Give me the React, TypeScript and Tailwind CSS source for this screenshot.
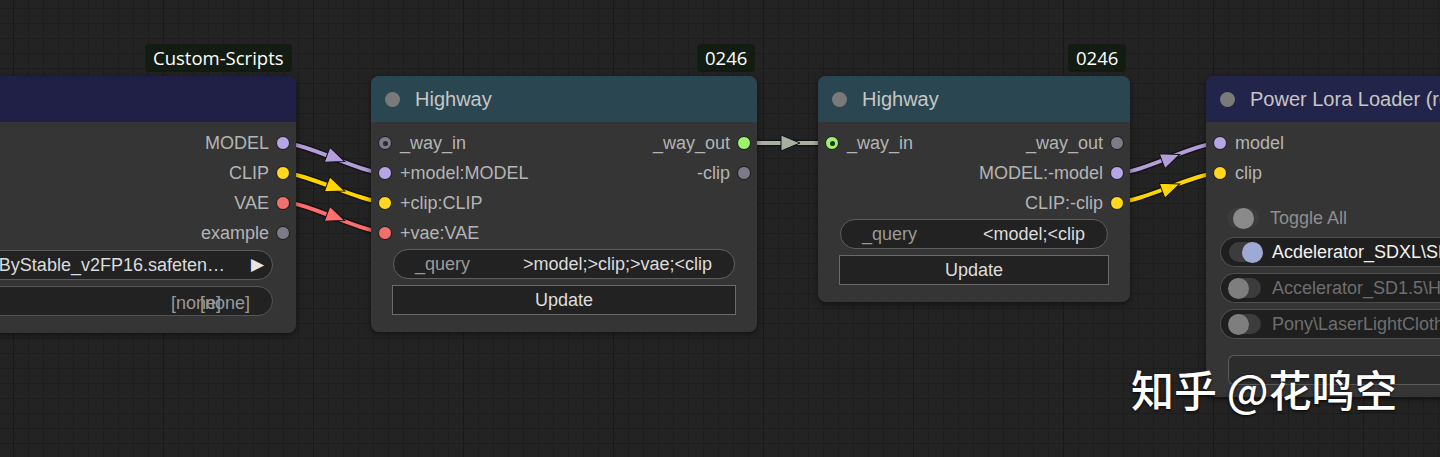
import React from 'react'

type Pt = [number, number]

const SLOT: Record<string, string> = {
  model: 'bg-[#b7a6e6]',
  clip: 'bg-[#ffd81f]',
  vae: 'bg-[#f0706c]',
  gray: 'bg-[#7c7b88]',
  green: 'bg-[#9cf26c]',
}

function Link({ from, to, color }: { from: Pt; to: Pt; color: string }) {
  const [x0, y0] = from
  const [x1, y1] = to
  const d = Math.max((x1 - x0) * 0.25, 10)
  const path = `M ${x0} ${y0} C ${x0 + d} ${y0}, ${x1 - d} ${y1}, ${x1} ${y1}`
  const mx = (x0 + x1) / 2
  const my = (y0 + y1) / 2
  const ang = (Math.atan2(1.5 * (y1 - y0), 1.5 * (x1 - x0) - 1.5 * d) * 180) / Math.PI
  return (
    <g>
      <path d={path} fill="none" stroke="#111" strokeWidth={7} strokeOpacity={0.8} />
      <path d={path} fill="none" stroke={color} strokeWidth={4} />
      <path
        d="M 10 0 L -9 -8 L -9 8 Z"
        fill={color}
        stroke="#111"
        strokeWidth={1}
        transform={`translate(${mx + 2} ${my}) rotate(${ang})`}
      />
    </g>
  )
}

function Dot({ kind, hollow }: { kind: string; hollow?: boolean }) {
  return (
    <span
      className={`w-[14px] h-[14px] rounded-full border border-[#1b1b1b] shrink-0 flex items-center justify-center ${SLOT[kind]}`}
    >
      {hollow && <span className="w-[5px] h-[5px] rounded-full bg-[#2a2a2a]" />}
    </span>
  )
}

function Row({ left, right }: { left?: [string, string, boolean?]; right?: [string, string] }) {
  return (
    <div className="h-[30px] flex items-center justify-between">
      {left ? (
        <div className="flex items-center gap-[8px] pl-[7px]">
          <Dot kind={left[1]} hollow={left[2]} />
          <span>{left[0]}</span>
        </div>
      ) : (
        <span />
      )}
      {right ? (
        <div className="flex items-center gap-[7px] pr-[6px]">
          <span>{right[0]}</span>
          <Dot kind={right[1]} />
        </div>
      ) : (
        <span />
      )}
    </div>
  )
}

function Title({ text, bg }: { text: string; bg: string }) {
  return (
    <div className={`h-[46px] rounded-t-[8px] flex items-center pl-[14px] gap-[15px] ${bg}`}>
      <span className="w-[15px] h-[15px] rounded-full bg-[#7a7a7a] shrink-0" />
      <span className="text-[20px] text-[#c6c6c6] whitespace-nowrap">{text}</span>
    </div>
  )
}

function Query({ value }: { value: string }) {
  return (
    <div className="h-[30px] mx-[22px] rounded-full border border-[#5f5f5f] bg-[#222] flex items-center justify-between pl-[21px] pr-[22px]">
      <span className="text-[#9a9a9a]">_query</span>
      <span className="text-[#dcdcdc]">{value}</span>
    </div>
  )
}

function UpdateButton() {
  return (
    <div className="h-[30px] mx-[21px] border border-[#6a6a6a] bg-[#222] flex items-center justify-center text-[#dedede]">
      Update
    </div>
  )
}

function Badge({ text, left }: { text: string; left: string }) {
  return (
    <div
      className={`absolute top-[44px] h-[28px] px-[8px] rounded-[4px] bg-[#121c12] text-white text-[18.5px] leading-none flex items-center font-['Open_Sans',sans-serif] ${left}`}
    >
      {text}
    </div>
  )
}

function Toggle({ on, dim }: { on?: boolean; dim?: boolean }) {
  return (
    <span className="relative w-[32px] h-[20px] rounded-full bg-[#3c3c3c] shrink-0 flex items-center">
      <span
        className={`absolute w-[21px] h-[21px] rounded-full ${
          on ? 'left-[13px] bg-[#9eaad4]' : dim ? 'left-[-1px] bg-[#7e7e7e]' : 'left-[6px] bg-[#8a8a8a]'
        }`}
      />
    </span>
  )
}

function LoraRow({ text, on }: { text: string; on?: boolean }) {
  return (
    <div className="h-[30px] ml-[14px] rounded-l-full border border-r-0 border-[#4e4e4e] bg-[#1f1f1f] flex items-center pl-[8px] gap-[11px] whitespace-nowrap overflow-hidden">
      <Toggle on={on} dim={!on} />
      <span className={on ? 'text-[#f2f2f2]' : 'text-[#6e6e6e]'}>{text}</span>
    </div>
  )
}

export default function App() {
  return (
    <div className="relative w-[1440px] h-[457px] overflow-hidden bg-[#232323] [background-image:linear-gradient(to_right,#191919_1px,transparent_1px),linear-gradient(to_right,#1d1d1d_1px,transparent_1px),linear-gradient(to_bottom,#1d1d1d_1px,transparent_1px)] [background-size:150px_150px,15px_15px,15px_15px] [background-position:13px_0,13px_0,0_8px] font-['Liberation_Sans',Arial,sans-serif] text-[18px] text-[#b4b4b4]">
      {/* links, drawn below the nodes */}
      <svg className="absolute inset-0" width={1440} height={457}>
        <Link from={[282, 143]} to={[385, 173]} color="#b39ddb" />
        <Link from={[282, 173]} to={[385, 202]} color="#ffd500" />
        <Link from={[282, 202]} to={[385, 232]} color="#ff6e6e" />
        <Link from={[744, 143]} to={[832, 143]} color="#a7b1a2" />
        <Link from={[1117, 173]} to={[1220, 143]} color="#b39ddb" />
        <Link from={[1117, 202]} to={[1220, 173]} color="#ffd500" />
      </svg>

      <Badge text="Custom-Scripts" left="left-[145px]" />
      <Badge text="0246" left="left-[697px]" />
      <Badge text="0246" left="left-[1068px]" />

      {/* checkpoint loader, cut at the left edge */}
      <div className="absolute left-[-204px] top-[76px] w-[500px] rounded-[8px] bg-[#353535] shadow-[0_2px_6px_rgba(0,0,0,0.5)]">
        <div className="h-[46px] rounded-t-[8px] bg-[#202046]" />
        <div className="pt-[6px] pb-[17px]">
          <Row right={['MODEL', 'model']} />
          <Row right={['CLIP', 'clip']} />
          <Row right={['VAE', 'vae']} />
          <Row right={['example', 'gray']} />
          <div className="mt-[2px] h-[30px] mr-[23px] rounded-full border border-[#5a5a5a] bg-[#222] flex items-center justify-end pr-[8px] gap-[26px] text-[#dcdcdc]">
            <span className="whitespace-nowrap">ByStable_v2FP16.safeten…</span>
            <span className="text-[#e6e6e6] text-[17px]">▶</span>
          </div>
          <div className="relative mt-[6px] h-[30px] mr-[23px] rounded-full border border-[#555] bg-[#222] text-[#999]">
            <span className="absolute right-[51px] top-[3px]">[none]</span>
            <span className="absolute right-[22px] top-[3px]">[none]</span>
          </div>
        </div>
      </div>

      {/* Highway 1 */}
      <div className="absolute left-[371px] top-[76px] w-[386px] rounded-[8px] bg-[#353535] shadow-[0_2px_6px_rgba(0,0,0,0.5)]">
        <Title text="Highway" bg="bg-[#2a4650]" />
        <div className="pt-[6px] pb-[17px]">
          <Row left={['_way_in', 'gray', true]} right={['_way_out', 'green']} />
          <Row left={['+model:MODEL', 'model']} right={['-clip', 'gray']} />
          <Row left={['+clip:CLIP', 'clip']} />
          <Row left={['+vae:VAE', 'vae']} />
          <div className="mt-px">
            <Query value=">model;>clip;>vae;<clip" />
          </div>
          <div className="mt-[6px]">
            <UpdateButton />
          </div>
        </div>
      </div>

      {/* Highway 2 */}
      <div className="absolute left-[818px] top-[76px] w-[312px] rounded-[8px] bg-[#353535] shadow-[0_2px_6px_rgba(0,0,0,0.5)]">
        <Title text="Highway" bg="bg-[#2a4650]" />
        <div className="pt-[6px] pb-[17px]">
          <Row left={['_way_in', 'green', true]} right={['_way_out', 'gray']} />
          <Row right={['MODEL:-model', 'model']} />
          <Row right={['CLIP:-clip', 'clip']} />
          <div className="mt-px">
            <Query value="<model;<clip" />
          </div>
          <div className="mt-[6px]">
            <UpdateButton />
          </div>
        </div>
      </div>

      {/* Power Lora Loader */}
      <div className="absolute left-[1206px] top-[76px] w-[300px] rounded-[8px] bg-[#353535] shadow-[0_2px_6px_rgba(0,0,0,0.5)]">
        <Title text="Power Lora Loader (rgthree)" bg="bg-[#232449]" />
        <div className="pt-[6px] pb-[12px]">
          <Row left={['model', 'model']} />
          <Row left={['clip', 'clip']} />
          <div className="mt-[15px] h-[30px] flex items-center pl-[21px] gap-[11px]">
            <Toggle />
            <span className="text-[#8e8e8e]">Toggle All</span>
          </div>
          <div className="mt-[4px] flex flex-col gap-[6px]">
            <LoraRow text="Acdelerator_SDXL\SDXL_Lightning" on />
            <LoraRow text="Accelerator_SD1.5\Hyper-SD15" />
            <LoraRow text="Pony\LaserLightClothing" />
          </div>
          <div className="mt-[16px] h-[30px] ml-[22px] rounded-l-[6px] border border-r-0 border-[#5a5a5a] bg-[#2c2c2c]" />
        </div>
      </div>

      {/* watermark */}
      <div className="absolute left-[1131px] top-[367px] text-[43px] leading-none font-medium text-white font-['Noto_Sans_CJK_SC',sans-serif] [text-shadow:0_1px_3px_rgba(0,0,0,0.9)] whitespace-nowrap">
        知乎 @花鸣空
      </div>
    </div>
  )
}
